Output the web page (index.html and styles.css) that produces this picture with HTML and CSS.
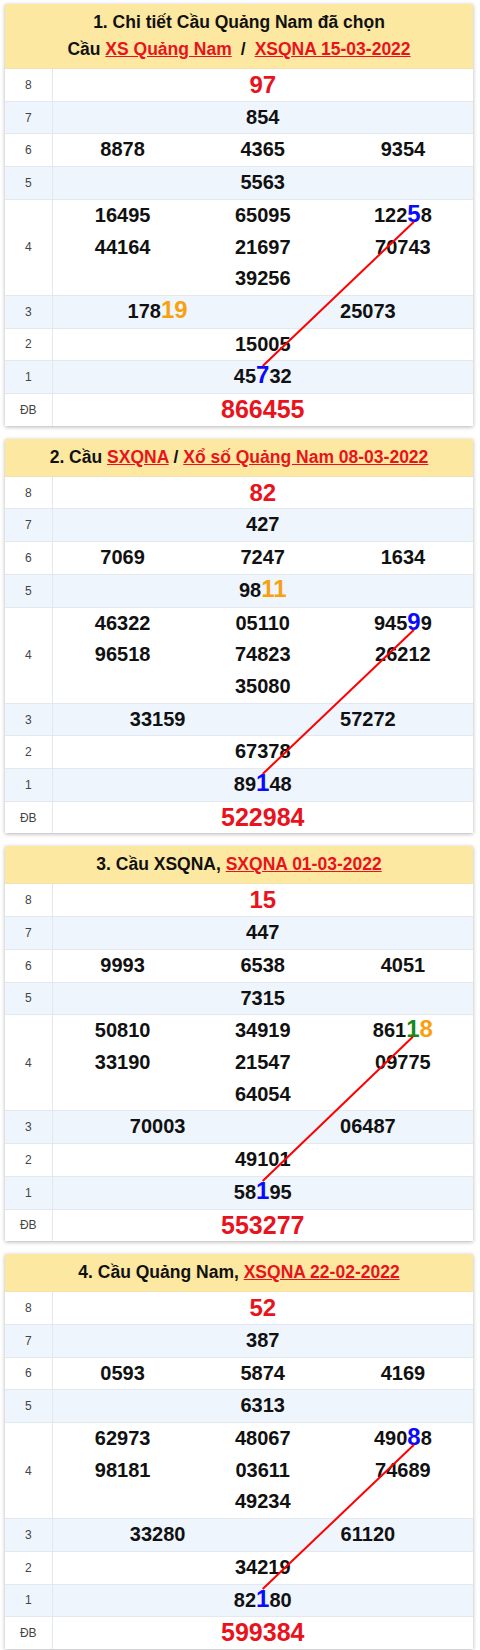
FILE: index.html
```html
<!DOCTYPE html>
<html lang="vi">
<head>
<meta charset="utf-8">
<title>Cầu Quảng Nam</title>
<link rel="stylesheet" href="styles.css">
</head>
<body>

<section class="card">
  <header class="card-head">
    <div>1. Chi tiết Cầu Quảng Nam đã chọn</div>
    <div>Cầu <a href="#">XS Quảng Nam</a><span class="sep">/</span><a href="#">XSQNA 15-03-2022</a></div>
  </header>
  <div class="card-body">
    <table class="results">
      <tr><td class="lbl">8</td><td><div class="nums one"><span class="n special">97</span></div></td></tr>
      <tr class="alt"><td class="lbl">7</td><td><div class="nums one"><span class="n">854</span></div></td></tr>
      <tr><td class="lbl">6</td><td><div class="nums"><span class="n">8878</span><span class="n">4365</span><span class="n">9354</span></div></td></tr>
      <tr class="alt"><td class="lbl">5</td><td><div class="nums one"><span class="n">5563</span></div></td></tr>
      <tr><td class="lbl">4</td><td><div class="nums"><span class="n">16495</span><span class="n">65095</span><span class="n">122<span class="hl blue from">5</span>8</span><span class="n">44164</span><span class="n">21697</span><span class="n">70743</span><span class="n">39256</span></div></td></tr>
      <tr class="alt"><td class="lbl">3</td><td><div class="nums two"><span class="n">178<span class="hl orange">19</span></span><span class="n">25073</span></div></td></tr>
      <tr><td class="lbl">2</td><td><div class="nums one"><span class="n">15005</span></div></td></tr>
      <tr class="alt"><td class="lbl">1</td><td><div class="nums one"><span class="n">45<span class="hl blue to">7</span>32</span></div></td></tr>
      <tr><td class="lbl">ĐB</td><td><div class="nums one"><span class="n special db">866455</span></div></td></tr>
    </table>
    <svg class="bridge"><line x1="0" y1="0" x2="0" y2="0"/></svg>
  </div>
</section>

<section class="card">
  <header class="card-head">
    <div>2. Cầu <a href="#">SXQNA</a> / <a href="#">Xổ số Quảng Nam 08-03-2022</a></div>
  </header>
  <div class="card-body">
    <table class="results">
      <tr><td class="lbl">8</td><td><div class="nums one"><span class="n special">82</span></div></td></tr>
      <tr class="alt"><td class="lbl">7</td><td><div class="nums one"><span class="n">427</span></div></td></tr>
      <tr><td class="lbl">6</td><td><div class="nums"><span class="n">7069</span><span class="n">7247</span><span class="n">1634</span></div></td></tr>
      <tr class="alt"><td class="lbl">5</td><td><div class="nums one"><span class="n">98<span class="hl orange">11</span></span></div></td></tr>
      <tr><td class="lbl">4</td><td><div class="nums"><span class="n">46322</span><span class="n">05110</span><span class="n">945<span class="hl blue from">9</span>9</span><span class="n">96518</span><span class="n">74823</span><span class="n">26212</span><span class="n">35080</span></div></td></tr>
      <tr class="alt"><td class="lbl">3</td><td><div class="nums two"><span class="n">33159</span><span class="n">57272</span></div></td></tr>
      <tr><td class="lbl">2</td><td><div class="nums one"><span class="n">67378</span></div></td></tr>
      <tr class="alt"><td class="lbl">1</td><td><div class="nums one"><span class="n">89<span class="hl blue to">1</span>48</span></div></td></tr>
      <tr><td class="lbl">ĐB</td><td><div class="nums one"><span class="n special db">522984</span></div></td></tr>
    </table>
    <svg class="bridge"><line x1="0" y1="0" x2="0" y2="0"/></svg>
  </div>
</section>

<section class="card">
  <header class="card-head">
    <div>3. Cầu XSQNA, <a href="#">SXQNA 01-03-2022</a></div>
  </header>
  <div class="card-body">
    <table class="results">
      <tr><td class="lbl">8</td><td><div class="nums one"><span class="n special">15</span></div></td></tr>
      <tr class="alt"><td class="lbl">7</td><td><div class="nums one"><span class="n">447</span></div></td></tr>
      <tr><td class="lbl">6</td><td><div class="nums"><span class="n">9993</span><span class="n">6538</span><span class="n">4051</span></div></td></tr>
      <tr class="alt"><td class="lbl">5</td><td><div class="nums one"><span class="n">7315</span></div></td></tr>
      <tr><td class="lbl">4</td><td><div class="nums"><span class="n">50810</span><span class="n">34919</span><span class="n">861<span class="hl green from">1</span><span class="hl orange">8</span></span><span class="n">33190</span><span class="n">21547</span><span class="n">09775</span><span class="n">64054</span></div></td></tr>
      <tr class="alt"><td class="lbl">3</td><td><div class="nums two"><span class="n">70003</span><span class="n">06487</span></div></td></tr>
      <tr><td class="lbl">2</td><td><div class="nums one"><span class="n">49101</span></div></td></tr>
      <tr class="alt"><td class="lbl">1</td><td><div class="nums one"><span class="n">58<span class="hl blue to">1</span>95</span></div></td></tr>
      <tr><td class="lbl">ĐB</td><td><div class="nums one"><span class="n special db">553277</span></div></td></tr>
    </table>
    <svg class="bridge"><line x1="0" y1="0" x2="0" y2="0"/></svg>
  </div>
</section>

<section class="card">
  <header class="card-head">
    <div>4. Cầu Quảng Nam, <a href="#">XSQNA 22-02-2022</a></div>
  </header>
  <div class="card-body">
    <table class="results">
      <tr><td class="lbl">8</td><td><div class="nums one"><span class="n special">52</span></div></td></tr>
      <tr class="alt"><td class="lbl">7</td><td><div class="nums one"><span class="n">387</span></div></td></tr>
      <tr><td class="lbl">6</td><td><div class="nums"><span class="n">0593</span><span class="n">5874</span><span class="n">4169</span></div></td></tr>
      <tr class="alt"><td class="lbl">5</td><td><div class="nums one"><span class="n">6313</span></div></td></tr>
      <tr><td class="lbl">4</td><td><div class="nums"><span class="n">62973</span><span class="n">48067</span><span class="n">490<span class="hl blue from">8</span>8</span><span class="n">98181</span><span class="n">03611</span><span class="n">74689</span><span class="n">49234</span></div></td></tr>
      <tr class="alt"><td class="lbl">3</td><td><div class="nums two"><span class="n">33280</span><span class="n">61120</span></div></td></tr>
      <tr><td class="lbl">2</td><td><div class="nums one"><span class="n">34219</span></div></td></tr>
      <tr class="alt"><td class="lbl">1</td><td><div class="nums one"><span class="n">82<span class="hl blue to">1</span>80</span></div></td></tr>
      <tr><td class="lbl">ĐB</td><td><div class="nums one"><span class="n special db">599384</span></div></td></tr>
    </table>
    <svg class="bridge"><line x1="0" y1="0" x2="0" y2="0"/></svg>
  </div>
</section>

<script src="script.js"></script>
</body>
</html>
```
FILE: styles.css
```css
* { box-sizing: border-box; }

body {
  margin: 0;
  padding: 4px 7px 0 5px;
  background: #fff;
  font-family: "Liberation Sans", Arial, sans-serif;
  color: #111;
}

.card {
  margin-bottom: 13px;
  background: #fff;
  box-shadow: 0 1px 4px rgba(0, 0, 0, 0.3);
}

.card-head {
  background: #fde8a1;
  text-align: center;
  font-weight: bold;
  font-size: 17.5px;
  line-height: 27px;
  padding: 5px 6px;
  border-bottom: 1px solid #f1e2ae;
  color: #111;
}

.card-head a {
  color: #e8131c;
  text-decoration: underline;
}

.card-head .sep {
  margin: 0 9px;
}

.card-body {
  position: relative;
}

.results {
  width: 100%;
  border-collapse: collapse;
  table-layout: fixed;
}

.results td {
  padding: 0;
  border-bottom: 1px solid #e3e8ee;
  vertical-align: middle;
}

.results tr:last-child td {
  border-bottom: 0;
}

.results .lbl {
  width: 47px;
  border-right: 1px solid #e3e8ee;
  text-align: center;
  font-size: 12px;
  color: #444;
}

.results .alt td {
  background: #eef5fd;
}

.nums {
  display: flex;
  flex-wrap: wrap;
  justify-content: center;
}

.n {
  flex: 0 0 33.3333%;
  text-align: center;
  font-size: 20px;
  font-weight: bold;
  line-height: 31.7px;
  color: #111;
}

.two .n { flex-basis: 50%; }
.one .n { flex-basis: 100%; }

.special {
  color: #e8131c;
  font-size: 24px;
}

.special.db {
  font-size: 25px;
}

.hl {
  font-size: 24px;
  line-height: 1;
}

.blue { color: #0a0aff; }
.orange { color: #f9a00f; }
.green { color: #178a17; }

.bridge {
  position: absolute;
  left: 0;
  top: 0;
  width: 100%;
  height: 100%;
  overflow: visible;
  pointer-events: none;
}

.bridge line {
  stroke: #f00;
  stroke-width: 2;
}
```
FILE: script.js
```js
(function () {
  var ASC = 0.905, DESC = 0.212, DIGIT = 0.716;
  function glyphBox(el) {
    var r = el.getBoundingClientRect();
    var fs = parseFloat(getComputedStyle(el).fontSize);
    var baseline = r.top + r.height * (ASC / (ASC + DESC));
    return { cx: r.left + r.width / 2, bottom: baseline, top: baseline - DIGIT * fs };
  }
  function draw() {
    document.querySelectorAll('.card-body').forEach(function (body) {
      var a = body.querySelector('.from');
      var b = body.querySelector('.to');
      var line = body.querySelector('.bridge line');
      if (!a || !b || !line) return;
      var br = body.getBoundingClientRect();
      var ga = glyphBox(a), gb = glyphBox(b);
      line.setAttribute('x1', (ga.cx - br.left).toFixed(1));
      line.setAttribute('y1', (ga.bottom - br.top).toFixed(1));
      line.setAttribute('x2', (gb.cx - br.left).toFixed(1));
      line.setAttribute('y2', (gb.top - br.top).toFixed(1));
    });
  }
  draw();
  window.addEventListener('load', draw);
  window.addEventListener('resize', draw);
})();
```
